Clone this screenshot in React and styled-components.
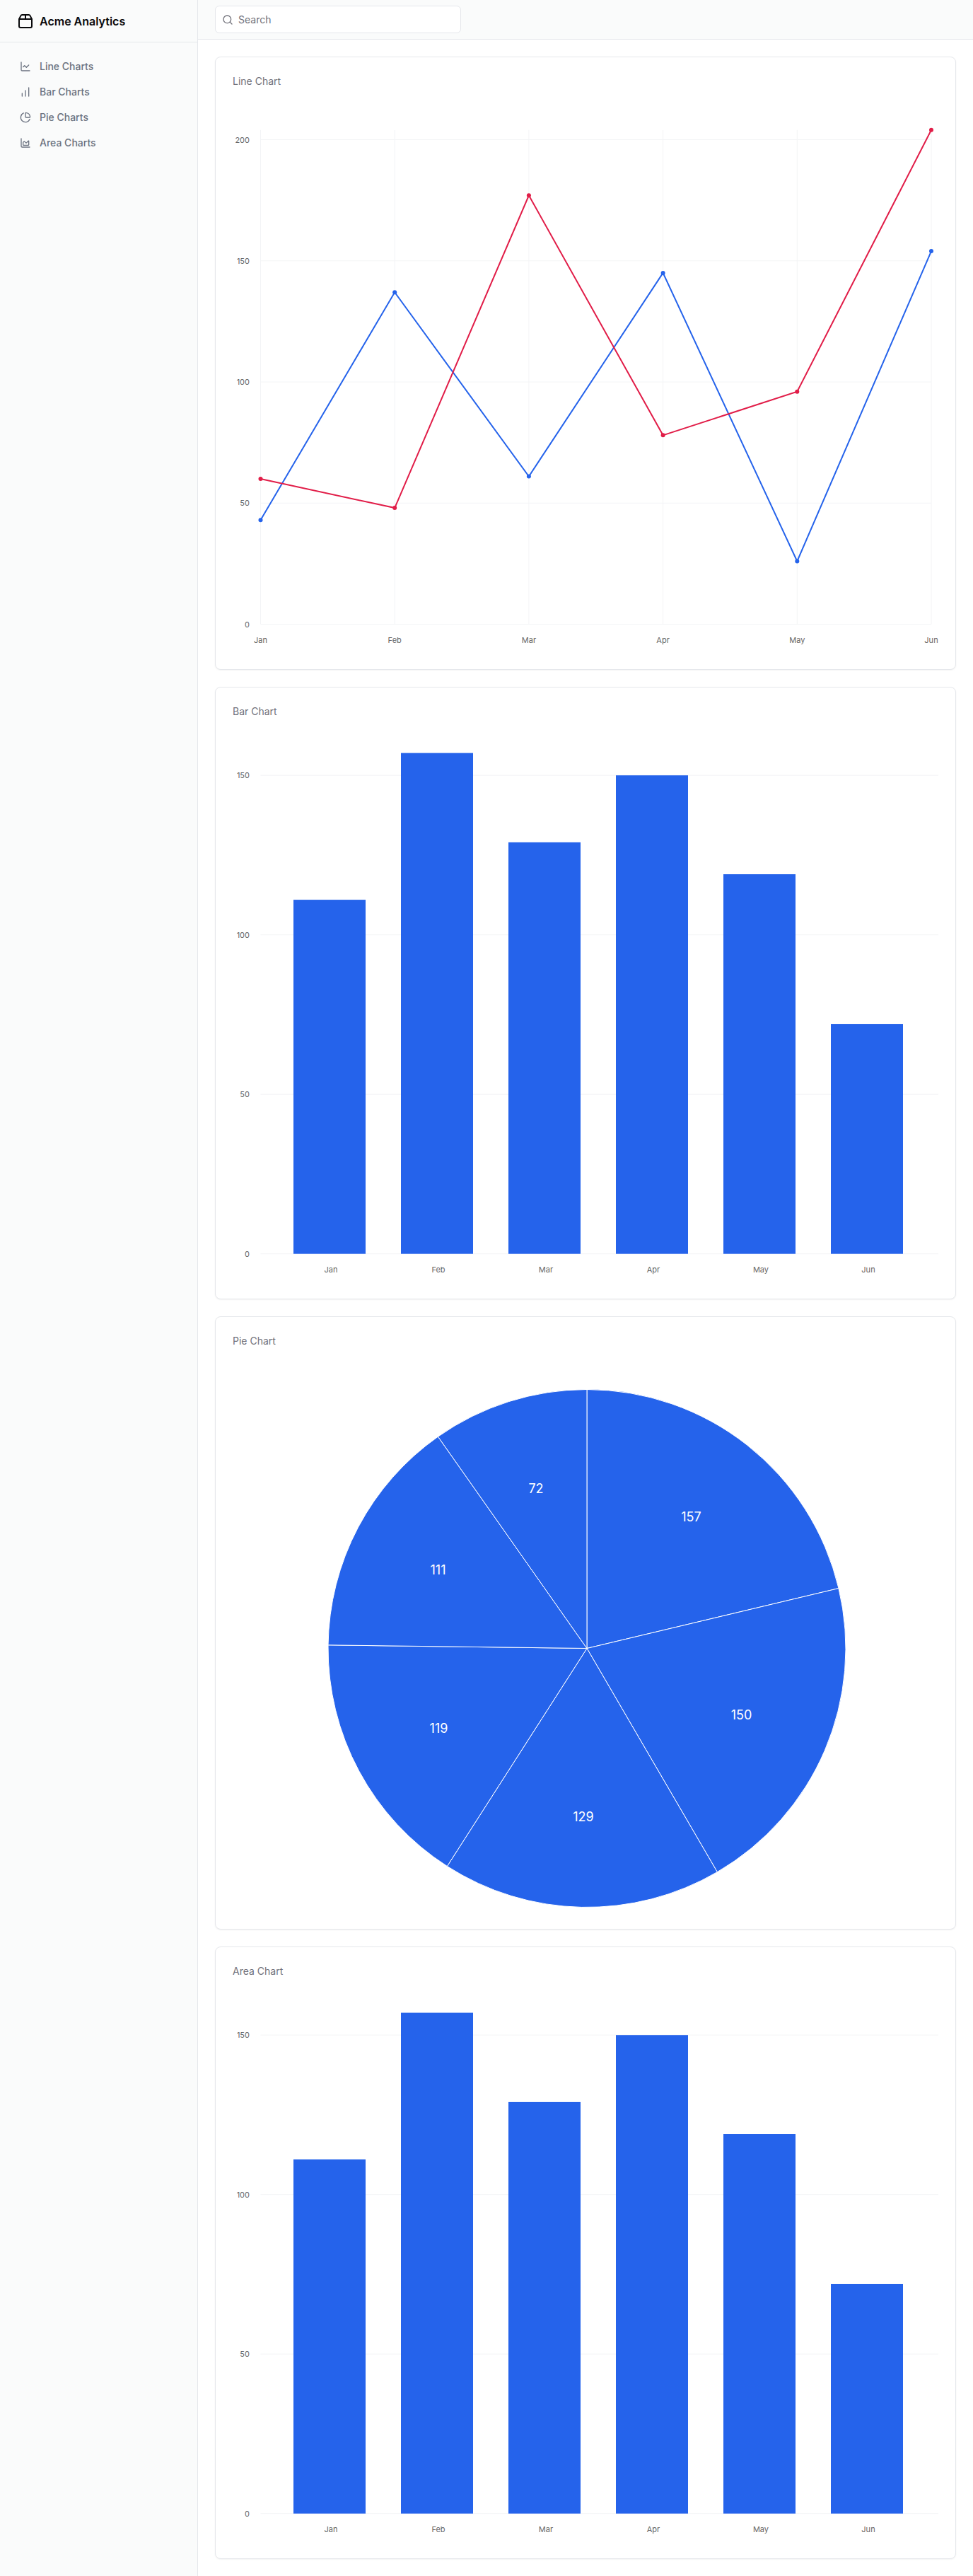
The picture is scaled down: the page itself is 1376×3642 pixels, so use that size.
import React from 'react';
import styled, { createGlobalStyle } from 'styled-components';
import { ChartArea, ChartLine, ChartNoAxesColumnIncreasing, ChartPie, Package2, Search } from 'lucide-react';

const GlobalStyle = createGlobalStyle`
  * { box-sizing: border-box; }
  body {
    margin: 0;
    background: #fff;
    font-family: Inter, "Liberation Sans", sans-serif;
  }
`;

const Shell = styled.div`
  display: flex;
  width: 1376px;
  min-height: 100vh;
`;

const Sidebar = styled.aside`
  flex: none;
  width: 280px;
  background: #fafbfb;
  border-right: 1px solid #e5e7eb;
`;

const Brand = styled.div`
  display: flex;
  align-items: center;
  gap: 8px;
  height: 60px;
  padding: 0 24px;
  border-bottom: 1px solid #e5e7eb;
  color: #09090b;
  font-size: 16px;
  font-weight: 600;
`;

const Nav = styled.nav`
  display: flex;
  flex-direction: column;
  padding: 16px;
`;

const NavItem = styled.a`
  display: flex;
  align-items: center;
  gap: 12px;
  padding: 8px 12px;
  color: #6b7280;
  font-size: 14px;
  line-height: 20px;
  font-weight: 500;
`;

const Main = styled.div`
  flex: 1;
  min-width: 0;
`;

const Header = styled.header`
  height: 56px;
  padding: 8px 24px 0;
  background: #fafbfb;
  border-bottom: 1px solid #e5e7eb;
`;

const SearchBox = styled.label`
  display: flex;
  align-items: center;
  gap: 7px;
  width: 348px;
  height: 39px;
  padding: 0 9px;
  background: #fff;
  border: 1px solid #e5e7eb;
  border-radius: 6px;
  color: #71717a;
`;

const SearchInput = styled.input`
  flex: 1;
  min-width: 0;
  border: 0;
  outline: 0;
  padding: 0;
  background: transparent;
  font: inherit;
  font-size: 14px;
  &::placeholder { color: #71717a; opacity: 1; }
`;

const Content = styled.main`
  display: flex;
  flex-direction: column;
  gap: 24px;
  padding: 24px;
`;

const Card = styled.section`
  height: 866.5px;
  padding: 24px;
  background: #fff;
  border: 1px solid #e5e7eb;
  border-radius: 8px;
  box-shadow: 0 1px 2px rgba(0, 0, 0, 0.05);
`;

const CardTitle = styled.h2`
  margin: 0 0 16.5px;
  color: #71717a;
  font-size: 14px;
  line-height: 20px;
  font-weight: 400;
`;

const Plot = styled.svg`
  display: block;
  width: 998px;
  height: 780px;
`;

const GridLine = styled.line`
  stroke: #f3f4f6;
  stroke-width: 1;
`;

const AxisLabel = styled.text`
  fill: #666;
  font-size: 11px;
  text-anchor: ${(p) => p.$anchor || 'middle'};
  dominant-baseline: central;
`;

const SliceLabel = styled.text`
  fill: #fff;
  font-size: 18px;
  text-anchor: middle;
  dominant-baseline: central;
`;

const Series = styled.polyline`
  fill: none;
  stroke: ${(p) => p.$color};
  stroke-width: 2;
`;

const BLUE = '#2563eb';
const RED = '#e11d48';
const MONTHS = ['Jan', 'Feb', 'Mar', 'Apr', 'May', 'Jun'];
const VALUES = [111, 157, 129, 150, 119, 72];

const NAV = [
  { label: 'Line Charts', Icon: ChartLine },
  { label: 'Bar Charts', Icon: ChartNoAxesColumnIncreasing },
  { label: 'Pie Charts', Icon: ChartPie },
  { label: 'Area Charts', Icon: ChartArea },
];

const LINES = [
  { color: BLUE, data: [43, 137, 61, 145, 26, 154] },
  { color: RED, data: [60, 48, 177, 78, 96, 204] },
];

// pixel frame of the plots inside the svg
const LEFT = 39.5;
const BASE = 740.5;

function LineChart() {
  const stepX = 189.7;
  const right = LEFT + stepX * 5;
  const x = (i) => LEFT + stepX * i;
  const y = (v) => BASE - v * 3.425;
  return (
    <Plot>
      {[0, 50, 100, 150, 200].map((t) => (
        <GridLine key={t} x1={LEFT} x2={right} y1={y(t)} y2={y(t)} />
      ))}
      {MONTHS.map((m, i) => (
        <GridLine key={m} x1={x(i)} x2={x(i)} y1={y(204)} y2={BASE} />
      ))}
      {[0, 50, 100, 150, 200].map((t) => (
        <AxisLabel key={t} $anchor="end" x={24} y={y(t)}>{t}</AxisLabel>
      ))}
      {MONTHS.map((m, i) => (
        <AxisLabel key={m} x={x(i)} y={BASE + 22}>{m}</AxisLabel>
      ))}
      {LINES.map((line) => (
        <g key={line.color}>
          <Series $color={line.color} points={line.data.map((v, i) => `${x(i)},${y(v)}`).join(' ')} />
          {line.data.map((v, i) => (
            <circle key={i} cx={x(i)} cy={y(v)} r={3} fill={line.color} />
          ))}
        </g>
      ))}
    </Plot>
  );
}

function BarChart() {
  const y = (v) => 740.7 - v * 4.51;
  return (
    <Plot>
      {[0, 50, 100, 150].map((t) => (
        <GridLine key={t} x1={LEFT} x2={998} y1={y(t)} y2={y(t)} />
      ))}
      {[0, 50, 100, 150].map((t) => (
        <AxisLabel key={t} $anchor="end" x={24} y={y(t)}>{t}</AxisLabel>
      ))}
      {VALUES.map((v, i) => (
        <rect key={i} x={86 + 152 * i} y={y(v)} width={102} height={v * 4.51} fill={BLUE} />
      ))}
      {MONTHS.map((m, i) => (
        <AxisLabel key={m} x={139 + 152 * i} y={762.7}>{m}</AxisLabel>
      ))}
    </Plot>
  );
}

// slices run clockwise from the top, largest months first
const SLICES = [
  { value: 157, at: [648.5, 221] },
  { value: 150, at: [719.5, 501.5] },
  { value: 129, at: [496, 645] },
  { value: 119, at: [291.5, 520.5] },
  { value: 111, at: [290.5, 296.5] },
  { value: 72, at: [429, 181] },
];

function PieChart() {
  const cx = 501;
  const cy = 407.5;
  const r = 366;
  const total = SLICES.reduce((a, s) => a + s.value, 0);
  const point = (deg) => {
    const rad = (deg * Math.PI) / 180;
    return [cx + r * Math.sin(rad), cy - r * Math.cos(rad)];
  };
  let angle = 0;
  const paths = SLICES.map((s) => {
    const start = angle;
    angle += (s.value / total) * 360;
    const [x1, y1] = point(start);
    const [x2, y2] = point(angle);
    return `M${cx} ${cy}L${x1} ${y1}A${r} ${r} 0 0 1 ${x2} ${y2}Z`;
  });
  return (
    <Plot>
      {paths.map((d, i) => (
        <path key={i} d={d} fill={BLUE} stroke="#fff" strokeWidth={1} />
      ))}
      {SLICES.map((s) => (
        <SliceLabel key={s.value} x={s.at[0]} y={s.at[1]}>{s.value}</SliceLabel>
      ))}
    </Plot>
  );
}

export default function App() {
  return (
    <Shell>
      <GlobalStyle />
      <Sidebar>
        <Brand>
          <Package2 size={24} />
          Acme Analytics
        </Brand>
        <Nav>
          {NAV.map(({ label, Icon }) => (
            <NavItem key={label}>
              <Icon size={16} />
              {label}
            </NavItem>
          ))}
        </Nav>
      </Sidebar>
      <Main>
        <Header>
          <SearchBox>
            <Search size={16} />
            <SearchInput placeholder="Search" />
          </SearchBox>
        </Header>
        <Content>
          <Card>
            <CardTitle>Line Chart</CardTitle>
            <LineChart />
          </Card>
          <Card>
            <CardTitle>Bar Chart</CardTitle>
            <BarChart />
          </Card>
          <Card>
            <CardTitle>Pie Chart</CardTitle>
            <PieChart />
          </Card>
          <Card>
            <CardTitle>Area Chart</CardTitle>
            <BarChart />
          </Card>
        </Content>
      </Main>
    </Shell>
  );
}
